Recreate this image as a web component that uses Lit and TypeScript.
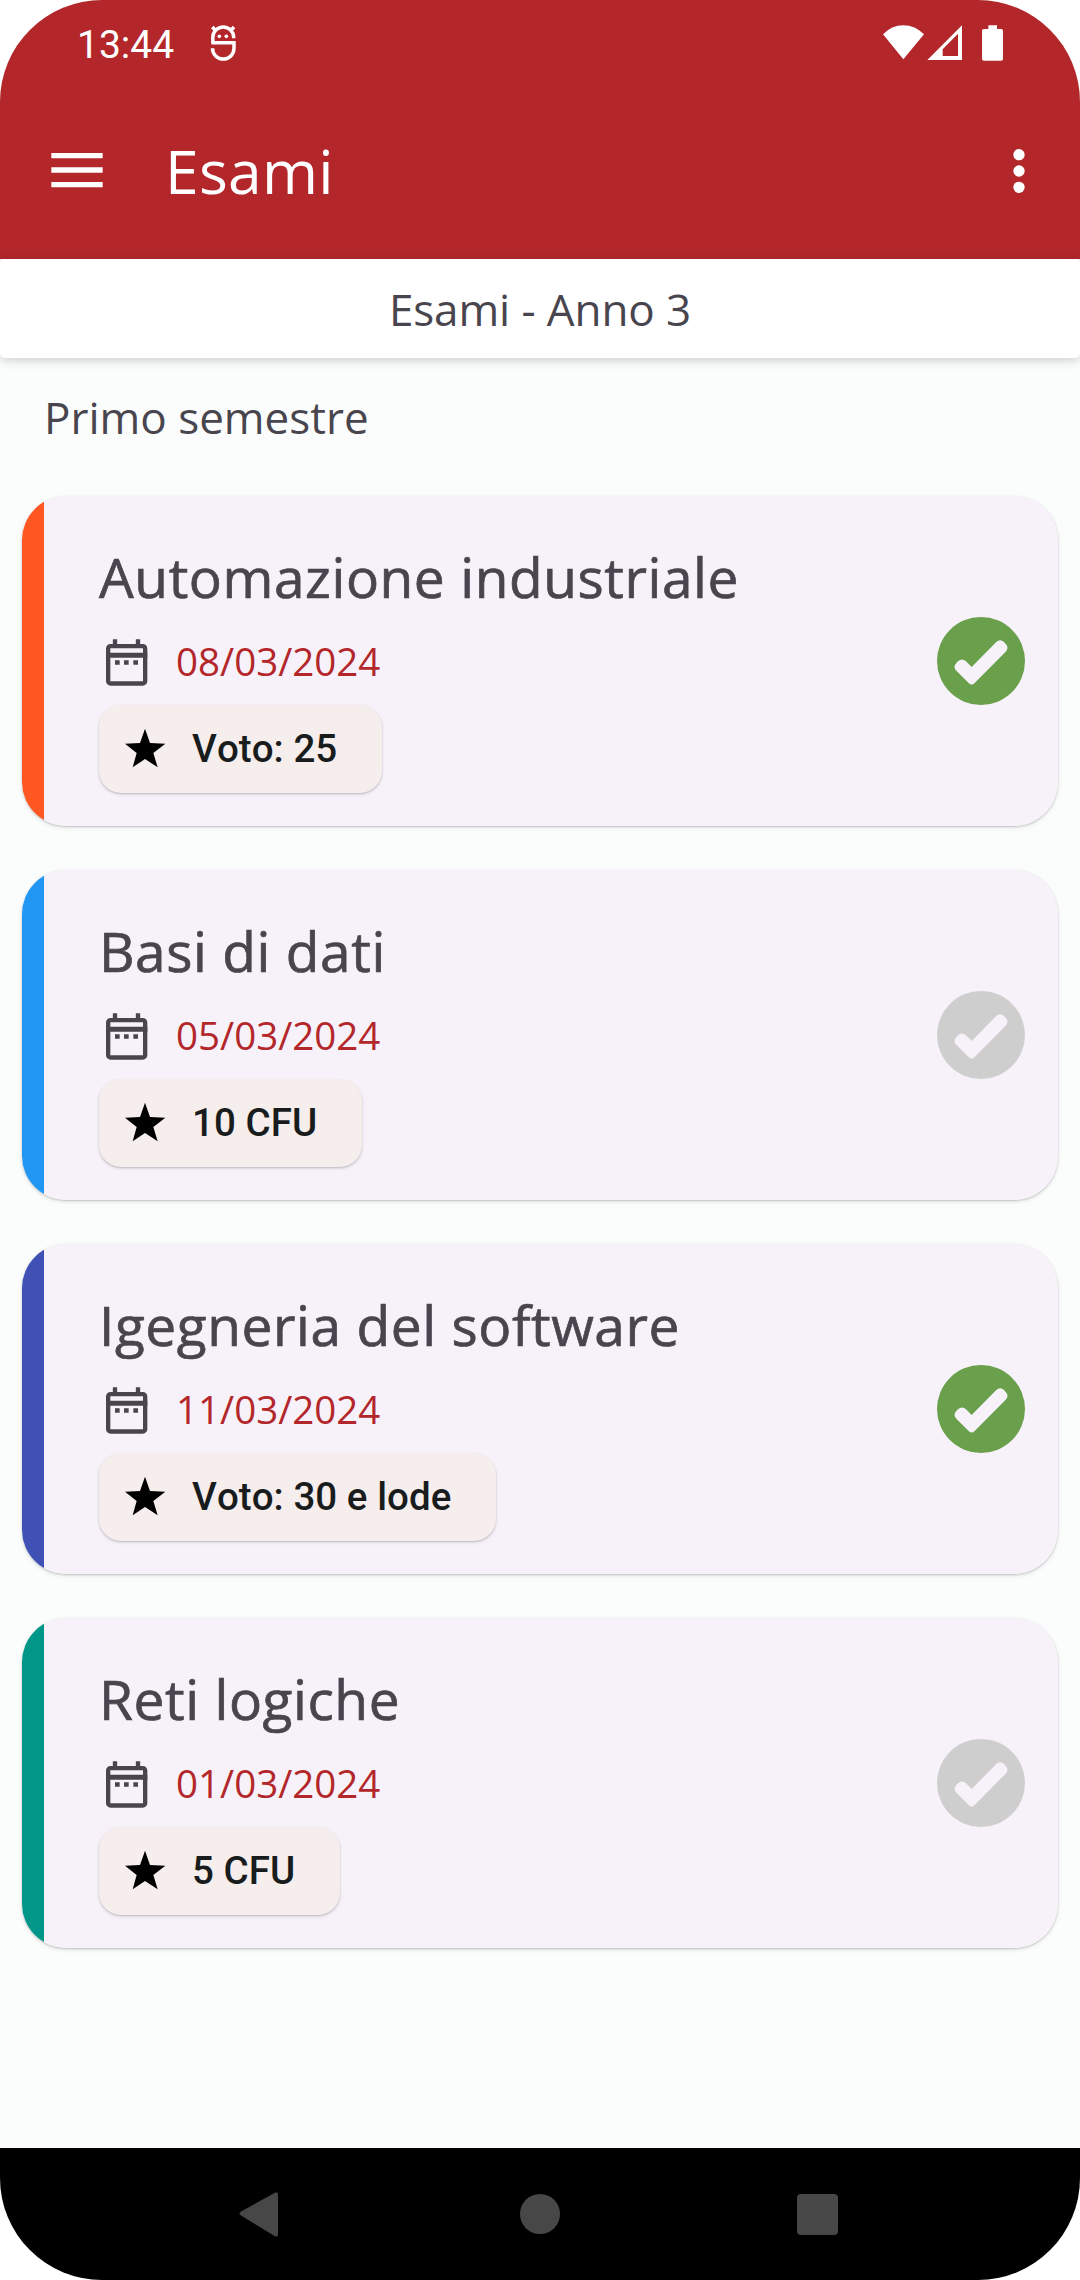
import { LitElement, html, css } from "lit";
import { customElement, property } from "lit/decorators.js";
import { classMap } from "lit/directives/class-map.js";

interface Exam {
  title: string;
  date: string;
  badge: string;
  color: string;
  done: boolean;
}

const EXAMS: Exam[] = [
  { title: "Automazione industriale", date: "08/03/2024", badge: "Voto: 25", color: "orange", done: true },
  { title: "Basi di dati", date: "05/03/2024", badge: "10 CFU", color: "blue", done: false },
  { title: "Igegneria del software", date: "11/03/2024", badge: "Voto: 30 e lode", color: "indigo", done: true },
  { title: "Reti logiche", date: "01/03/2024", badge: "5 CFU", color: "teal", done: false },
];

@customElement("exam-card")
export class ExamCard extends LitElement {
  @property({ attribute: false }) exam!: Exam;

  static styles = css`
    :host { display: block; }
    .card {
      display: flex;
      height: 330.5px;
      border-radius: 44px;
      overflow: hidden;
      background: #f7f2fa;
    }
    .shadow {
      border-radius: 44px;
      box-shadow: 0 0 1px rgba(0, 0, 0, 0.1), 0 1px 2px rgba(0, 0, 0, 0.18), 0 2px 5px rgba(0, 0, 0, 0.08);
    }
    .stripe { width: 22px; flex: none; }
    .orange { background: #ff5722; }
    .blue { background: #2196f3; }
    .indigo { background: #3f51b5; }
    .teal { background: #009688; }
    .body {
      flex: 1;
      display: flex;
      flex-direction: column;
      align-items: flex-start;
      padding: 44px 0 0 55px;
    }
    .title {
      font: 400 55px/73px "Open Sans", sans-serif;
      letter-spacing: 0.57px;
      -webkit-text-stroke: 0.7px #49454e;
      color: #49454e;
      white-space: nowrap;
    }
    .date-row {
      display: flex;
      align-items: center;
      height: 55px;
      margin-top: 22px;
      gap: 22px;
    }
    .cal { width: 55px; height: 55px; display: block; }
    .date { padding-bottom: 3px; font: 400 38.5px/52px "Open Sans", sans-serif; color: #b3272b; }
    .chip {
      display: flex;
      align-items: center;
      height: 88px;
      margin-top: 15px;
      padding: 0 45px 0 25px;
      gap: 26px;
      border-radius: 22px;
      background: #f6eded;
      box-shadow: 0 1px 2px rgba(0, 0, 0, 0.2), 0 2px 4px rgba(0, 0, 0, 0.06);
      font: 500 38.5px/46px Roboto, sans-serif;
      font-kerning: none;
      letter-spacing: 0.05px;
      color: #191c1c;
      white-space: nowrap;
    }
    .star { width: 42px; height: 42px; display: block; }
    .check { width: 88px; height: 88px; align-self: center; margin-right: 33px; flex: none; fill: #cecece; }
    .check.done { fill: #6a9f4c; }
    .check .tick { fill: #f7f2fa; }
  `;

  render() {
    const e = this.exam;
    return html`
      <div class="shadow">
        <div class="card">
          <div class="stripe ${e.color}"></div>
          <div class="body">
            <div class="title">${e.title}</div>
            <div class="date-row">
              <svg class="cal" viewBox="0 0 165 165">
                <g fill="none" stroke="#49454e">
                  <rect x="27.5" y="33.5" width="111" height="112" rx="7" stroke-width="13" />
                  <path d="M21 60.500H145" stroke-width="15" />
                  <path d="M48 13V30M117 13V30" stroke-width="13" />
                  <path d="M48 82.500H62M75 82.500H89M103 82.500H117" stroke-width="13" />
                </g>
              </svg>
              <div class="date">${e.date}</div>
            </div>
            <div class="chip">
              <svg class="star" viewBox="0 0 126 126">
                <path d="M63 2L78 45L124 47L88 75L101 118L63 93L26 118L38 75L3 47L48 45Z" />
              </svg>
              <span>${e.badge}</span>
            </div>
          </div>
          <svg class=${classMap({ check: true, done: e.done })} viewBox="0 0 264 264">
            <circle cx="132" cy="132" r="132" />
            <path
              class="tick"
              d="M104 150L177 76Q189 64 201 75L206 81Q217 92 206 104L113 198Q104 207 95 198L58 161Q47 150 58 138L63 133Q75 122 87 133Z"
            />
          </svg>
        </div>
      </div>
    `;
  }
}

@customElement("app-root")
export class AppRoot extends LitElement {
  static styles = css`
    :host { display: block; width: 1080px; height: 2280px; background: #fff; }
    svg { display: block; }
    .screen {
      display: flex;
      flex-direction: column;
      height: 2280px;
      border-radius: 102px;
      overflow: hidden;
      background: #fbfdfc;
    }
    .status {
      display: flex;
      align-items: center;
      height: 86px;
      padding: 0 76px 0 77px;
      background: #b3272b;
      color: #fff;
    }
    .clock { padding-top: 4px; font: 400 39px/46px Roboto, sans-serif; }
    .debug { width: 30px; height: 40px; margin-left: 34px; }
    .spacer { flex: 1; }
    .radios { width: 122px; height: 40px; }
    .toolbar {
      display: flex;
      align-items: center;
      height: 169px;
      padding: 0 54px 4px 51px;
      background: #b3272b;
      color: #fff;
    }
    .menu { width: 52px; height: 36px; margin-bottom: 2px; }
    .heading {
      flex: 1;
      margin-left: 62px;
      font: 400 60.5px/82px "Open Sans", sans-serif;
      letter-spacing: 0.3px;
    }
    .more { width: 14px; height: 46px; }
    .year {
      height: 99px;
      border-radius: 5px;
      background: #fff;
      box-shadow: 0 2px 11px rgba(0, 0, 0, 0.2);
      font: 400 44px/100px "Open Sans", sans-serif;
      letter-spacing: -0.1px;
      color: #49454e;
      text-align: center;
    }
    .semester { padding: 29px 44px 0; font: 400 44px/60px "Open Sans", sans-serif; color: #49454e; }
    .list { flex: 1; display: flex; flex-direction: column; gap: 43.5px; padding: 48.5px 22px 0; }
    .nav { height: 132px; background: #000; }
  `;

  render() {
    return html`
      <div class="screen">
        <div class="status">
          <span class="clock">13:44</span>
          <svg class="debug" viewBox="625 70 90 120" fill="none" stroke="#fff" stroke-width="10.5">
            <path d="M639.500 129V113A31 31 0 0 1 702 113V116" />
            <path d="M635 129H703V146A32 32 0 0 1 638.500 146" />
            <path d="M638 82L648 93M703 82L693 93" />
            <g fill="#fff" stroke="none"><circle cx="659" cy="110" r="5.500" /><circle cx="680" cy="110" r="5.500" /></g>
          </svg>
          <div class="spacer"></div>
          <svg class="radios" viewBox="306 69 366 120" fill="#fff">
            <path d="M309 103Q335 76 370 76T432 103L370 178Z" />
            <path fill-rule="evenodd" d="M442 180L546 76V180ZM488 148V168H534V101Z" />
            <path d="M625 76H651V87H663Q669 87 669 93V176Q669 182 663 182H612Q606 182 606 176V93Q606 87 612 87H625Z" />
          </svg>
        </div>
        <div class="toolbar">
          <svg class="menu" viewBox="0 0 156 108" fill="#fff">
            <path d="M1 3H155V19H1ZM1 46H155V62H1ZM1 90H155V106H1Z" />
          </svg>
          <span class="heading">Esami</span>
          <svg class="more" viewBox="0 0 42 138" fill="#fff">
            <circle cx="21" cy="20" r="17" /><circle cx="21" cy="69" r="17" /><circle cx="21" cy="118" r="17" />
          </svg>
        </div>
        <div class="year">Esami - Anno 3</div>
        <div class="semester">Primo semestre</div>
        <div class="list">${EXAMS.map((exam) => html`<exam-card .exam=${exam}></exam-card>`)}</div>
        <svg class="nav" viewBox="0 0 1080 132" fill="#474747">
          <path d="M274.500 45Q278 43 278 47V86Q278 90 274.500 88L241 67.500Q238 65.500 241 63.500Z" />
          <circle cx="540" cy="66" r="20" />
          <rect x="797" y="46" width="41" height="41" rx="4" />
        </svg>
      </div>
    `;
  }
}
